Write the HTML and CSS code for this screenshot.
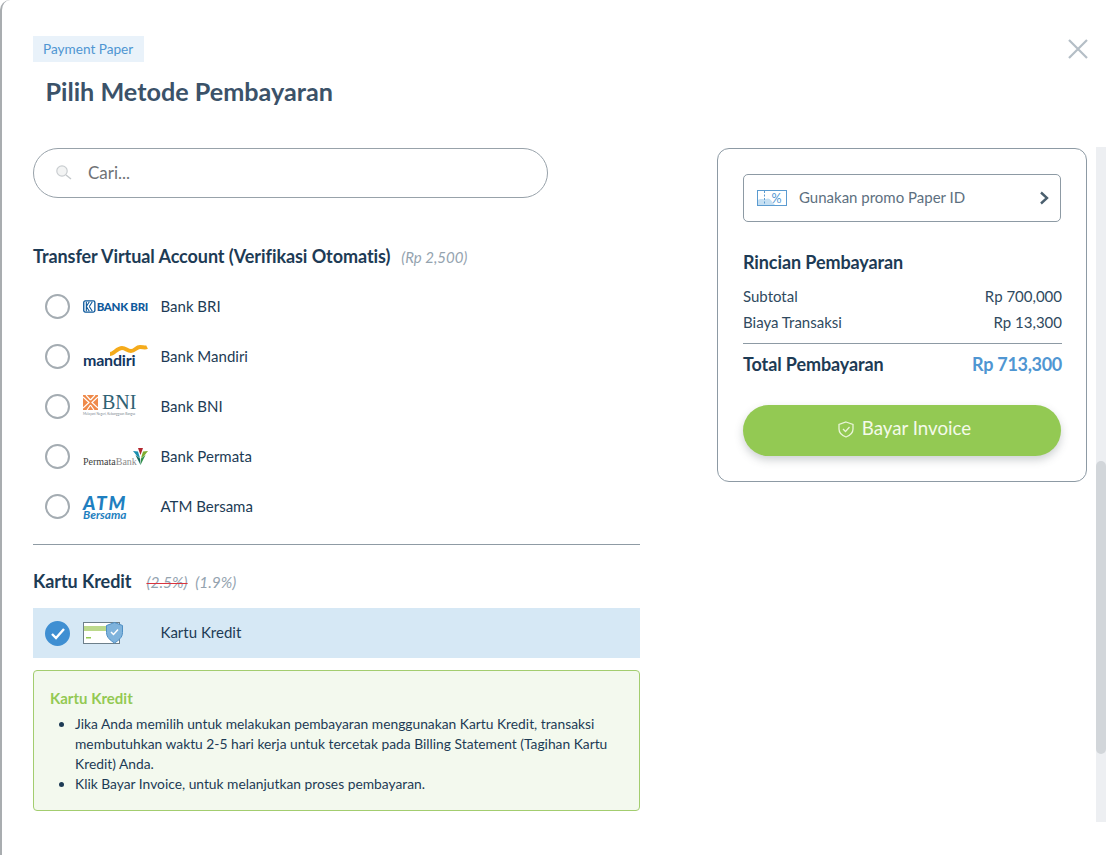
FILE: index.html
```html
<!DOCTYPE html>
<html lang="id">
<head>
<meta charset="utf-8">
<title>Pilih Metode Pembayaran</title>
<link rel="stylesheet" href="styles.css">
</head>
<body>
<div class="modal">
  <header class="head">
    <div class="head-text">
      <span class="tag">Payment Paper</span>
      <h1 class="title">Pilih Metode Pembayaran</h1>
    </div>
    <svg class="close" width="20" height="20" viewBox="0 0 20 20"><path d="M1 1 19 19M19 1 1 19" stroke="#b4bec6" stroke-width="2.2" fill="none"/></svg>
  </header>
  <div class="content">
    <main class="left">
      <div class="search">
        <svg class="search-icon" width="18" height="18" viewBox="0 0 18 18"><circle cx="7" cy="7" r="5.2" fill="#f3f4f4" stroke="#c9cdd0" stroke-width="1.2"/><path d="M11 11 16 15" stroke="#c4c8cb" stroke-width="1.4" fill="none"/></svg>
        <span class="placeholder">Cari...</span>
      </div>
      <h2 class="section-title first">Transfer Virtual Account (Verifikasi Otomatis)<em class="fee">(Rp 2,500)</em></h2>
      <ul class="methods">
        <li class="method">
          <span class="radio"></span>
          <span class="logo">
            <svg width="17" height="17" viewBox="0 0 17 17"><rect x="1" y="1" width="15" height="15" rx="2" fill="none" stroke="#0f5a9c" stroke-width="1.800"/><path d="M4.500 2v13M4.500 8.500 8.500 2M4.500 8.500l4 6.500M8.500 8.500 12.500 2M8.500 8.500l4 6.500" fill="none" stroke="#0f5a9c" stroke-width="1.500"/></svg>
            <span class="bri-text">BANK BRI</span>
          </span>
          <span class="method-name">Bank BRI</span>
        </li>
        <li class="method">
          <span class="radio"></span>
          <span class="logo logo-mandiri">
            <span class="mandiri-text">mandiri</span>
            <svg class="mandiri-wave" width="39" height="11" viewBox="0 0 39 11"><path d="M1 9C5 9 8 3 13 3c4 0 5 3 9 3s5-4 9-4c3 0 5 1 7 0" fill="none" stroke="#f5ab1b" stroke-width="4"/></svg>
          </span>
          <span class="method-name">Bank Mandiri</span>
        </li>
        <li class="method">
          <span class="radio"></span>
          <span class="logo logo-bni">
            <span class="bni-row">
              <svg width="15" height="15" viewBox="0 0 15 15"><rect width="15" height="15" fill="#ef8a4a"/><path d="M0 2 6 7.500 0 13M15 2 9 7.500 15 13M3 0l4.500 5M12 0 7.500 5M4 15l3.500-5M11 15l-3.500-5" fill="none" stroke="#fff" stroke-width="1.200"/></svg>
              <span class="bni-text">BNI</span>
            </span>
            <span class="bni-sub">Melayani Negeri, Kebanggaan Bangsa</span>
          </span>
          <span class="method-name">Bank BNI</span>
        </li>
        <li class="method">
          <span class="radio"></span>
          <span class="logo logo-permata">
            <span class="permata-text">Permata<span class="permata-light">Bank</span></span>
            <svg class="permata-leaf" width="15" height="17" viewBox="0 0 15 17"><path d="M5 0h5L7.500 7z" fill="#b3262e"/><path d="M0 3l5 .5L7 10 4 8z" fill="#1a8fb0"/><path d="M15 3l-5 .5L8 10l3-2z" fill="#7dab2e"/><path d="M2.500 7 7 10.500 7.500 17z" fill="#15695c"/><path d="M12.500 7 8 10.500 7.500 17z" fill="#2f8f4a"/></svg>
          </span>
          <span class="method-name">Bank Permata</span>
        </li>
        <li class="method">
          <span class="radio"></span>
          <span class="logo logo-atm">
            <span class="atm-text">ATM</span>
            <span class="bersama-text">Bersama</span>
          </span>
          <span class="method-name">ATM Bersama</span>
        </li>
      </ul>
      <hr class="divider">
      <h2 class="section-title">Kartu Kredit<em class="fee fee-wide"><s class="old">(2.5%)</s> (1.9%)</em></h2>
      <div class="method selected">
        <span class="radio checked">
          <svg width="16" height="13" viewBox="0 0 16 13"><path d="M2 7l4 4 8-9" fill="none" stroke="#fff" stroke-width="2.400"/></svg>
        </span>
        <span class="logo">
          <svg width="40" height="24" viewBox="0 0 40 24"><rect x=".5" y="1.500" width="36" height="21" fill="#fff" stroke="#6d7f8a"/><rect x="1" y="5" width="26" height="5" fill="#bcd98c"/><rect x="3" y="16" width="5" height="1.500" fill="#94c951"/><path d="M31.500 1.500 39.500 4.500v7c0 5-4 8-8 10.500-4-2.500-8-5.500-8-10.500v-7z" fill="#7fb3dc" stroke="#4f8fc4"/><path d="M28 11l2.500 2.500 4.500-5" fill="none" stroke="#fff" stroke-width="1.500"/></svg>
        </span>
        <span class="method-name">Kartu Kredit</span>
      </div>
      <section class="note">
        <h3 class="note-title">Kartu Kredit</h3>
        <ul class="note-list">
          <li>Jika Anda memilih untuk melakukan pembayaran menggunakan Kartu Kredit, transaksi membutuhkan waktu 2-5 hari kerja untuk tercetak pada Billing Statement (Tagihan Kartu Kredit) Anda.</li>
          <li>Klik Bayar Invoice, untuk melanjutkan proses pembayaran.</li>
        </ul>
      </section>
    </main>
    <aside class="card">
      <div class="promo">
        <svg width="30" height="16" viewBox="0 0 30 16"><rect x=".5" y=".5" width="29" height="15" fill="#fff" stroke="#5b9bd0"/><path d="M1 15v-5c3-2 5 0 8-1 4-2 5 2 9 6z" fill="#c5dff2"/><path d="M7.500 1v14" stroke="#5b9bd0" stroke-dasharray="2 1.500" fill="none"/><text x="14.500" y="12.500" class="promo-pct">%</text></svg>
        <span class="promo-text">Gunakan promo Paper ID</span>
        <svg class="promo-arrow" width="10" height="14" viewBox="0 0 10 14"><path d="M2 1.500 8 7 2 12.500" fill="none" stroke="#4a5f6e" stroke-width="2.400"/></svg>
      </div>
      <h2 class="card-title">Rincian Pembayaran</h2>
      <div class="line"><span>Subtotal</span><span>Rp 700,000</span></div>
      <div class="line"><span>Biaya Transaksi</span><span>Rp 13,300</span></div>
      <div class="total"><span>Total Pembayaran</span><span class="total-value">Rp 713,300</span></div>
      <button class="pay" type="button">
        <svg width="16" height="17" viewBox="0 0 16 17"><path d="M8 1 15 3.500V8c0 4-3 6.500-7 8-4-1.500-7-4-7-8V3.500z" fill="none" stroke="#e9f5d8" stroke-width="1.300"/><path d="M5 8l2.500 2.500L11.500 6" fill="none" stroke="#e9f5d8" stroke-width="1.300"/></svg>
        Bayar Invoice
      </button>
    </aside>
    <div class="track"><div class="thumb"></div></div>
  </div>
</div>
</body>
</html>
```
FILE: styles.css
```css
* { box-sizing: border-box; }
html, body { margin: 0; height: 100%; overflow: hidden; background: #fff; }
body { font-family: Lato, "Liberation Sans", sans-serif; color: #1d3b55; }
.modal { height: 855px; background: #fff; border-left: 2px solid #a9adb0; border-top-left-radius: 10px; padding-top: 36px; }
.head { display: flex; justify-content: space-between; padding: 0 20px 0 31px; height: 111px; }
.head-text { display: flex; flex-direction: column; align-items: flex-start; }
.tag { background: #e9f2fa; color: #4f96d2; font-size: 13.600px; width: 111px; height: 26px; line-height: 26px; padding-left: 10px; white-space: nowrap; }
.title { margin: 13px 0 0 12.500px; font-size: 25.200px; line-height: 32px; font-weight: 700; color: #3b5269; }
.close { margin: 3px 0 0 0; }
.content { display: flex; height: 675px; padding-left: 31px; }
.left { width: 607px; padding-top: 1px; }
.search { width: 515px; height: 50px; border: 1px solid #98a2aa; border-radius: 25px; display: flex; align-items: center; padding-left: 21px; }
.search-icon { margin-right: 15px; }
.placeholder { font-size: 17px; line-height: 20px; color: #6f7275; }
.section-title { margin: 0; font-size: 18px; line-height: 24px; font-weight: 700; color: #1d3b55; letter-spacing: -0.07px; }
.section-title.first { margin-top: 46px; }
.fee { font-size: 15px; font-weight: 400; color: #94a3af; margin-left: 11px; letter-spacing: 0; }
.fee-wide { margin-left: 15px; font-size: 15.500px; }
.old { text-decoration-line: line-through; text-decoration-color: #d9343f; text-decoration-thickness: 1.300px; margin-right: 4px; }
.methods { list-style: none; margin: 12px 0 0; padding: 0; }
.method { display: flex; align-items: center; height: 50px; padding-left: 12px; }
.radio { width: 25px; height: 25px; border: 2px solid #a4acb2; border-radius: 50%; flex: none; margin-right: 13px; background: #fff; }
.radio.checked { background: #3f8fd2; border-color: #3f8fd2; display: flex; align-items: center; justify-content: center; }
.logo { width: 65px; flex: none; margin-right: 13px; display: flex; align-items: center; height: 34px; position: relative; }
.method-name { font-size: 15px; margin-left: -0.500px; color: #1d3b55; }
.selected .method-name { margin-top: -2px; }
.bri-text { font-size: 11.500px; font-weight: 900; color: #0f5a9c; margin-left: 1px; letter-spacing: -0.3px; white-space: nowrap; }
.logo-mandiri { align-items: flex-end; }
.mandiri-text { font-size: 16px; font-weight: 700; color: #13375f; letter-spacing: -0.2px; line-height: 17px; margin-bottom: 5px; }
.mandiri-wave { position: absolute; right: 0; top: 6px; }
.logo-bni { flex-direction: column; align-items: flex-start; padding-top: 6px; }
.bni-row { display: flex; align-items: center; gap: 4px; height: 15px; }
.bni-text { font-family: "Liberation Serif", serif; font-size: 20px; line-height: 15px; color: #2f6274; }
.bni-sub { font-size: 3.200px; line-height: 5px; margin-top: 2px; color: #7a8790; white-space: nowrap; }
.logo-permata { align-items: flex-end; padding-bottom: 6px; }
.permata-text { font-family: "Liberation Serif", serif; font-size: 10px; color: #3c3c3c; white-space: nowrap; line-height: 11px; }
.permata-light { color: #8c8c8c; }
.permata-leaf { position: absolute; right: 0; top: 9px; }
.logo-atm { flex-direction: column; align-items: flex-start; justify-content: flex-start; padding-top: 7px; }
.atm-text { font-size: 19px; line-height: 14px; height: 14px; font-weight: 900; font-style: italic; color: #1f7fc0; letter-spacing: 1.800px; }
.bersama-text { font-size: 11.800px; line-height: 10px; height: 10px; font-weight: 700; font-style: italic; color: #1f7fc0; letter-spacing: 0; }
.divider { border: 0; border-top: 1px solid #8f9ba4; margin: 13px 0 24px; }
.selected { background: #d6e8f5; }
.section-title + .selected { margin-top: 14px; }
.note { margin-top: 12px; height: 141px; background: #f3f9ee; border: 1px solid #a3cd6f; border-radius: 4px; padding: 17px 16px; }
.note-title { margin: 0; font-size: 15px; line-height: 20px; font-weight: 700; color: #93c953; }
.note-list { margin: 6px 0 0; padding: 0 0 0 25px; font-size: 13.800px; line-height: 20px; color: #1d3b55; }
.card { width: 370px; height: 334px; margin: 1px 0 0 77px; flex: none; border: 1px solid #8d9aa4; border-radius: 12px; padding: 25px; }
.promo { height: 48px; border: 1px solid #8d9aa4; border-radius: 5px; display: flex; align-items: center; padding: 0 11px 0 13px; }
.promo-pct { font-family: Lato, sans-serif; font-size: 12.500px; fill: #4f96d2; }
.promo-text { margin-left: 12px; margin-top: -2px; font-size: 15px; color: #5d7080; flex: 1; }
.card-title { margin: 28px 0 0; font-size: 18px; line-height: 24px; font-weight: 700; color: #1d3b55; letter-spacing: -0.1px; }
.line { display: flex; justify-content: space-between; font-size: 15px; line-height: 26px; color: #2f4a60; margin-right: -1px; }
.card-title + .line { margin-top: 9px; }
.total { display: flex; justify-content: space-between; margin: 8px -1px 0 0; border-top: 1px solid #8d9aa4; padding-top: 7px; font-size: 18px; line-height: 26px; font-weight: 700; color: #1d3b55; letter-spacing: -0.1px; }
.total-value { color: #4f96d2; letter-spacing: -0.3px; }
.pay { display: flex; align-items: center; justify-content: center; gap: 8px; width: 100%; height: 51px; margin-top: 28px; border: 0; border-radius: 26px; background: #93c953; color: #f4fae9; font-family: Lato, sans-serif; font-size: 18.700px; padding: 0 0 5px 5px; box-shadow: 0 4px 8px rgba(60, 70, 80, 0.25); }
.pay svg { margin-top: 3px; }
.track { width: 10px; height: 675px; margin-left: 9px; flex: none; background: #edeff2; padding-top: 314px; }
.thumb { height: 293px; background: #d2d6da; border-radius: 5px; }
```
